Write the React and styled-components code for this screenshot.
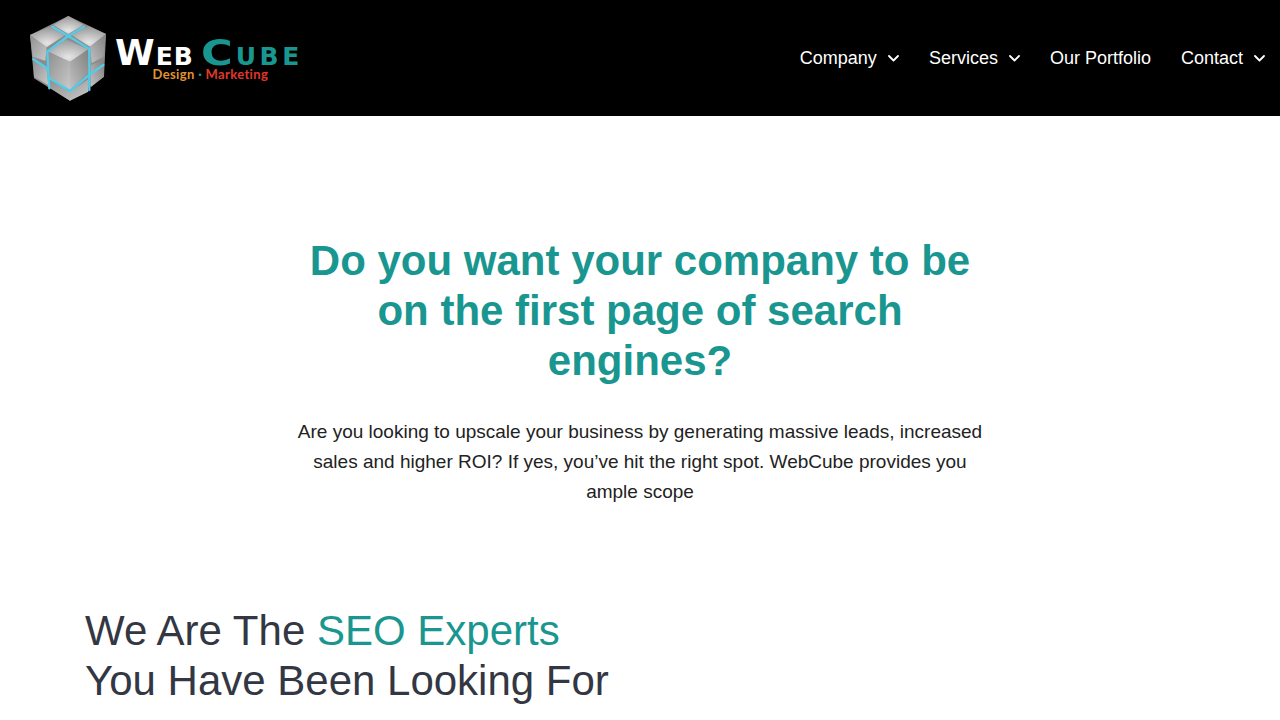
import React from 'react';
import styled, { createGlobalStyle } from 'styled-components';

const GlobalStyle = createGlobalStyle`
  html, body {
    margin: 0;
    padding: 0;
    background: #fff;
    overflow: hidden;
    font-family: "Liberation Sans", Arial, sans-serif;
  }
`;

const Header = styled.header`
  height: 116px;
  background: #000;
  display: flex;
  align-items: center;
  justify-content: space-between;
  padding: 0 0 0 20px;
`;

const Logo = styled.a`
  display: flex;
  align-items: center;
  height: 95px;
  margin-top: -1px;
`;

const CubeMark = styled.svg`
  width: 95px;
  height: 95px;
  flex: none;
`;

const Wordmark = styled.div`
  display: flex;
  flex-direction: column;
  align-items: center;
  margin-top: 4px;
  font-family: "DejaVu Sans", sans-serif;
`;

const BrandLine = styled.div`
  display: flex;
  align-items: baseline;
  gap: 7px;
  line-height: 30px;
  height: 30px;
  font-weight: 700;
`;

const BrandWord = styled.span`
  color: ${(p) => p.color};
  font-size: 25px;
  letter-spacing: ${(p) => p.$spacing}px;
`;

const BrandCap = styled.span`
  display: inline-block;
  font-size: 36px;
  transform-origin: left center;
  transform: scaleX(${(p) => p.$stretch || 1});
  margin-right: ${(p) => p.$extra || 0}px;
`;

const Tagline = styled.div`
  font-family: Lato, sans-serif;
  font-size: 13px;
  font-weight: 700;
  line-height: 14px;
  letter-spacing: 0.35px;
  margin-top: -1px;
  margin-left: 3px;
`;

const TagWord = styled.span`
  color: ${(p) => p.color};
`;

const Nav = styled.nav`
  display: flex;
  align-items: center;
`;

const NavItem = styled.a`
  display: flex;
  align-items: center;
  padding: 0 15px;
  font-size: 18px;
  line-height: 24px;
  color: #fff;
`;

const Chevron = styled.svg`
  width: 12px;
  height: 8px;
  margin-left: 10px;
  fill: none;
  stroke: #fff;
  stroke-width: 1.8;
  stroke-linecap: round;
  stroke-linejoin: round;
`;

const Hero = styled.section`
  display: flex;
  flex-direction: column;
  align-items: center;
  padding-top: 120px;
  text-align: center;
`;

const Title = styled.h1`
  width: 700px;
  margin: 0 0 31px;
  font-size: 42px;
  line-height: 50px;
  font-weight: 700;
  color: #1a9690;
`;

const Lead = styled.p`
  width: 690px;
  margin: 0;
  font-size: 19px;
  line-height: 30px;
  color: #222;
`;

const Experts = styled.section`
  padding: 99px 85px 0;
`;

const ExpertsTitle = styled.h2`
  margin: 0;
  font-size: 42px;
  line-height: 50px;
  font-weight: 400;
  color: #333743;
`;

const Accent = styled.span`
  color: #1a9690;
`;

const CubeLogo = () => (
  <CubeMark viewBox="0 0 285 285">
    <defs>
      <radialGradient id="topFace" cx="0.5" cy="0.8" r="0.75">
        <stop offset="0" stopColor="#e6e6e6" />
        <stop offset="1" stopColor="#9a9a9a" />
      </radialGradient>
      <linearGradient id="leftFace" x1="0" y1="0" x2="1" y2="1">
        <stop offset="0" stopColor="#8f8f8f" />
        <stop offset="1" stopColor="#c9c9c9" />
      </linearGradient>
      <linearGradient id="rightFace" x1="1" y1="0" x2="0" y2="1">
        <stop offset="0" stopColor="#808080" />
        <stop offset="1" stopColor="#c2c2c2" />
      </linearGradient>
      <filter id="soft">
        <feGaussianBlur stdDeviation="1.4" />
      </filter>
    </defs>
    <g filter="url(#soft)">
      <path d="M145 18 258 72 252 200 150 272 42 205 30 75Z" fill="#8c8c8c" />
      <path d="M145 18 190 45 145 72 100 45Z" fill="url(#topFace)" />
      <path d="M30 75 90 50 135 75 80 112Z" fill="url(#topFace)" />
      <path d="M155 75 205 48 258 72 210 110Z" fill="url(#topFace)" />
      <path d="M30 75 80 112 76 152 38 140Z" fill="url(#leftFace)" />
      <path d="M258 72 250 140 215 160 210 110Z" fill="url(#rightFace)" />
      <path d="M40 150 80 175 85 225 42 200Z" fill="url(#leftFace)" />
      <path d="M212 165 250 150 252 200 212 232Z" fill="url(#rightFace)" />
      <path d="M90 212 150 245 205 208 205 245 150 272 90 234Z" fill="url(#leftFace)" />
      <path d="M130 85 205 118 150 156 85 125Z" fill="url(#topFace)" />
      <path d="M85 125 150 156 150 240 90 205Z" fill="url(#leftFace)" />
      <path d="M150 156 205 118 205 188 150 240Z" fill="url(#rightFace)" />
      <g fill="none" stroke="#55cbe8" strokeWidth="7" strokeLinecap="round">
        <path d="M97 50 145 78 192 50" />
        <path d="M145 78 82 125 86 205 88 235" />
        <path d="M145 78 207 116" />
        <path d="M40 148 84 176" />
        <path d="M150 243 207 195 250 165" />
        <path d="M208 116 208 240" />
        <path d="M88 205 150 243" />
      </g>
    </g>
  </CubeMark>
);

const NavChevron = () => (
  <Chevron viewBox="0 0 12 8">
    <path d="M2 2 6.5 6.5 11 2" />
  </Chevron>
);

export default function App() {
  return (
    <>
      <GlobalStyle />
      <Header>
        <Logo>
          <CubeLogo />
          <Wordmark>
            <BrandLine>
              <BrandWord color="#fff" $spacing={1}>
                <BrandCap>W</BrandCap>EB
              </BrandWord>
              <BrandWord color="#1a9690" $spacing={3.5}>
                <BrandCap $stretch={1.2} $extra={5}>C</BrandCap>UBE
              </BrandWord>
            </BrandLine>
            <Tagline>
              <TagWord color="#e0922f">Design</TagWord>
              <TagWord color="#1a9690"> · </TagWord>
              <TagWord color="#e0392c">Marketing</TagWord>
            </Tagline>
          </Wordmark>
        </Logo>
        <Nav>
          <NavItem>Company<NavChevron /></NavItem>
          <NavItem>Services<NavChevron /></NavItem>
          <NavItem>Our Portfolio</NavItem>
          <NavItem>Contact<NavChevron /></NavItem>
        </Nav>
      </Header>
      <Hero>
        <Title>Do you want your company to be on the first page of search engines?</Title>
        <Lead>
          Are you looking to upscale your business by generating massive leads, increased sales and
          higher ROI? If yes, you’ve hit the right spot. WebCube provides you ample scope
        </Lead>
      </Hero>
      <Experts>
        <ExpertsTitle>
          We Are The <Accent>SEO Experts</Accent>
          <br />
          You Have Been Looking For
        </ExpertsTitle>
      </Experts>
    </>
  );
}
